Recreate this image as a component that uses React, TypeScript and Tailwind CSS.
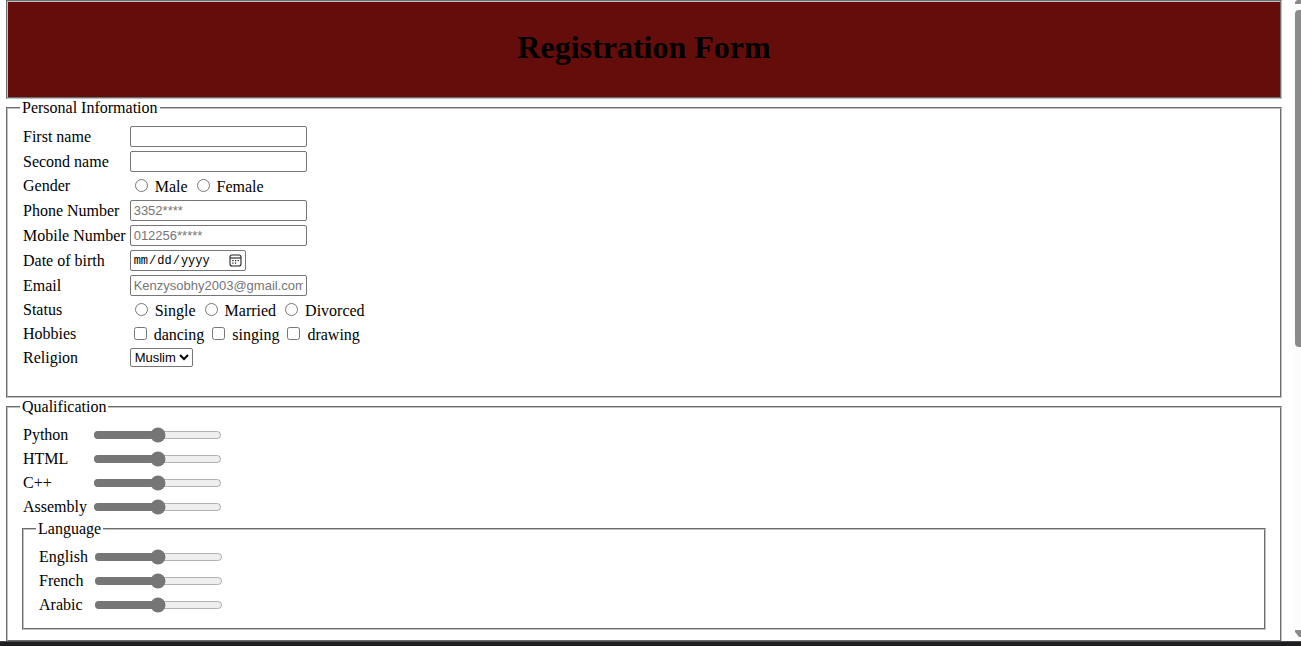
import { Fragment, type ReactNode } from "react";

const fieldsetClass =
  "min-w-0 border-2 border-[#c0c0c0] [border-style:groove] px-3 pt-1.5";
const legendClass = "px-0.5 leading-[18px]";
const inputClass =
  "h-[21px] rounded-[2px] border border-[#767676] bg-white px-[3px] font-['Liberation_Sans',Arial,sans-serif] text-[13px] placeholder:text-[#757575]";

function Field({
  id,
  label,
  tall = false,
  children,
}: {
  id: string;
  label: string;
  tall?: boolean;
  children: ReactNode;
}) {
  return (
    <>
      <label htmlFor={id} className="leading-[18px]">
        {label}
      </label>
      <div className={tall ? "flex h-[23px] items-center" : "flex h-[22px] items-center"}>
        {children}
      </div>
    </>
  );
}

function Choices({
  label,
  name,
  type,
  options,
}: {
  label: string;
  name: string;
  type: "radio" | "checkbox";
  options: string[];
}) {
  return (
    <>
      <span id={name} className="leading-[18px]">
        {label}
      </span>
      <div role="group" aria-labelledby={name} className="h-[22px] pt-px leading-5">
        {options.map((option) => (
          <Fragment key={option}>
            <label>
              <input
                type={type}
                name={name}
                className={
                  type === "radio"
                    ? "mt-[3px] mr-[3px] ml-[5px] size-[13px]"
                    : "my-[3px] mr-[3px] ml-1 size-[13px]"
                }
              />{" "}
              {option}
            </label>{" "}
          </Fragment>
        ))}
      </div>
    </>
  );
}

function CalendarIcon() {
  return (
    <svg
      aria-hidden="true"
      viewBox="0 0 13 13"
      fill="none"
      className="pointer-events-none absolute top-1 right-1 size-[13px]"
    >
      <rect x="1" y="1" width="11" height="11" rx="2" stroke="#222222" strokeWidth="1.1" />
      <path d="M1 4H12" stroke="#222222" strokeWidth="1.1" />
      <path
        d="M6 6h1.2v1.2H6zM8.6 6h1.2v1.2H8.6zM3.3 6h1.2v1.2H3.3zM3.3 8.5h1.2v1.2H3.3zM6 8.5h1.2v1.2H6z"
        fill="#222222"
      />
    </svg>
  );
}

function Sliders({ names }: { names: string[] }) {
  return (
    <div className="grid grid-cols-[max-content_1fr] items-center gap-x-1 gap-y-0.5 py-0.5 pl-[3px]">
      {names.map((name) => (
        <Field key={name} id={name} label={name}>
          <input
            id={name}
            type="range"
            defaultValue={50}
            className="m-0.5 h-4 w-[129px] accent-[#767676]"
          />
        </Field>
      ))}
    </div>
  );
}

export default function App() {
  return (
    <div className="flex h-screen flex-col overflow-hidden bg-white font-['Liberation_Serif','Times_New_Roman',serif] text-base text-black">
      <div className="flex min-h-0 flex-1">
        <form className="min-w-0 flex-1 overflow-hidden pr-2.5 pl-1.5">
          <header className="border-2 border-[#c0c0c0] bg-[#640d0b] pt-[26px] pb-[30px] [border-style:groove]">
            <h1 className="text-center text-[32px] leading-[39px] font-bold">Registration Form</h1>
          </header>

          <fieldset className={`${fieldsetClass} pb-[25px]`}>
            <legend className={legendClass}>Personal Information</legend>
            <div className="grid grid-cols-[max-content_1fr] items-center gap-x-1 gap-y-0.5 py-0.5 pl-[3px]">
              <Field id="first" label="First name" tall>
                <input id="first" type="text" className={`${inputClass} w-[177px]`} />
              </Field>
              <Field id="second" label="Second name" tall>
                <input id="second" type="text" className={`${inputClass} w-[177px]`} />
              </Field>
              <Choices label="Gender" name="gender" type="radio" options={["Male", "Female"]} />
              <Field id="phone" label="Phone Number" tall>
                <input id="phone" type="tel" placeholder="3352****" className={`${inputClass} w-[177px]`} />
              </Field>
              <Field id="mobile" label="Mobile Number" tall>
                <input id="mobile" type="tel" placeholder="012256*****" className={`${inputClass} w-[177px]`} />
              </Field>
              <Field id="birth" label="Date of birth" tall>
                <div className="relative flex">
                  <input
                    id="birth"
                    type="date"
                    className="h-[21px] w-[116px] rounded-[2px] border border-[#767676] bg-white px-0.5 font-['Liberation_Mono',monospace] text-[12px] [&::-webkit-calendar-picker-indicator]:opacity-0"
                  />
                  <CalendarIcon />
                </div>
              </Field>
              <Field id="email" label="Email" tall>
                <input
                  id="email"
                  type="email"
                  placeholder="Kenzysobhy2003@gmail.com"
                  className={`${inputClass} w-[177px]`}
                />
              </Field>
              <Choices label="Status" name="status" type="radio" options={["Single", "Married", "Divorced"]} />
              <Choices label="Hobbies" name="hobbies" type="checkbox" options={["dancing", "singing", "drawing"]} />
              <Field id="religion" label="Religion">
                <select
                  id="religion"
                  className="mb-0.5 h-[19px] w-[63px] rounded-[2px] border border-[#767676] bg-white font-['Liberation_Sans',Arial,sans-serif] text-[13px]"
                >
                  <option>Muslim</option>
                </select>
              </Field>
            </div>
          </fieldset>

          <fieldset className={`${fieldsetClass} pb-2.5`}>
            <legend className={legendClass}>Qualification</legend>
            <Sliders names={["Python", "HTML", "C++", "Assembly"]} />
            <fieldset className={`${fieldsetClass} mx-0.5 pb-2.5`}>
              <legend className={legendClass}>Language</legend>
              <Sliders names={["English", "French", "Arabic"]} />
            </fieldset>
          </fieldset>
        </form>

        <div aria-hidden="true" className="flex w-[9px] flex-col items-end overflow-hidden bg-[#fcfcfc]">
          <svg viewBox="0 0 6 4" className="h-1 w-1.5 shrink-0">
            <path d="M0 4V2L2 0H6V4Z" fill="#8b8b8b" />
          </svg>
          <div className="mt-1.5 h-[337px] w-1.5 shrink-0 rounded-l bg-[#8b8b8b]" />
          <svg viewBox="0 0 6 7" className="mt-auto mb-1 h-[7px] w-1.5 shrink-0">
            <path d="M0 0H6V7H4L0 2Z" fill="#8b8b8b" />
          </svg>
        </div>
      </div>
      <footer className="h-[5px] shrink-0 border-t border-[#4a4a4a] bg-[#1e1d20]" />
    </div>
  );
}
